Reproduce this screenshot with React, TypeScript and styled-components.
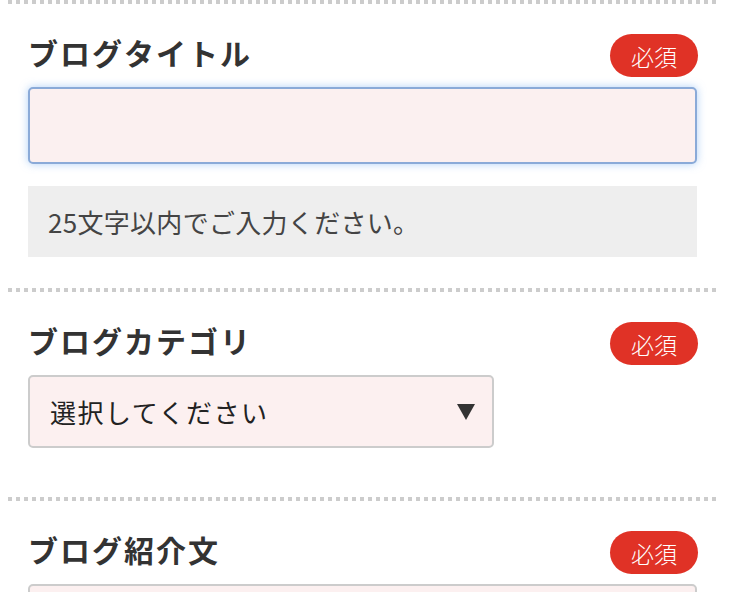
import * as React from 'react';
import styled, { createGlobalStyle } from 'styled-components';

const GlobalStyle = createGlobalStyle`
  html, body {
    margin: 0;
    padding: 0;
    overflow: hidden;
    background: #ffffff;
  }
  body {
    font-family: "Noto Sans CJK JP", "Noto Sans", sans-serif;
    color: #333333;
  }
`

const StyledForm = styled.div`
  width: 709px;
  margin-left: 8px;
`

const StyledDivider = styled.div`
  height: 4px;
  background-image: linear-gradient(to right, #cccccc 50%, transparent 50%);
  background-size: 8px 4px;
  background-repeat: repeat-x;
`

const StyledSection = styled.section<{ bottom: number }>`
  display: flex;
  flex-direction: column;
  padding: 30px 20px ${props => props.bottom}px;
`

const StyledHeader = styled.div`
  display: flex;
  align-items: center;
  justify-content: space-between;
  height: 43px;
  margin-bottom: 10px;
`

const StyledTitle = styled.h2`
  margin: 0 0 7px 0;
  font-size: 30px;
  font-weight: 700;
  letter-spacing: 2px;
  color: #333333;
  line-height: 1;
`

const StyledBadge = styled.span`
  display: flex;
  align-items: center;
  justify-content: center;
  width: 88px;
  height: 43px;
  border-radius: 22px;
  background-color: #e03226;
  color: #ffffff;
  font-size: 23px;
  font-weight: 300;
  margin-right: -1px;
`

const StyledInput = styled.input`
  box-sizing: border-box;
  width: 100%;
  height: 77px;
  margin: 0;
  border: 2px solid #8aaad8;
  border-radius: 5px;
  background-color: #fbf0f0;
  box-shadow: 0 0 9px rgba(110, 170, 240, 0.55);
  font-family: inherit;
  font-size: 26px;
  outline: none;
  padding: 0 20px;
`

const StyledHint = styled.div`
  display: flex;
  align-items: center;
  height: 71px;
  margin-top: 22px;
  padding-left: 20px;
  background-color: #eeeeee;
  color: #444444;
  font-size: 26px;
  letter-spacing: 0.3px;
`

const StyledSelect = styled.div`
  box-sizing: border-box;
  display: flex;
  align-items: center;
  justify-content: space-between;
  width: 466px;
  height: 73px;
  padding: 0 17px 0 20px;
  border: 2px solid #cccccc;
  border-radius: 5px;
  background-color: #fcf0f0;
  color: #222222;
  font-size: 26px;
  letter-spacing: 1.5px;
`

const StyledArrow = styled.span`
  width: 0;
  height: 0;
  border-left: 9px solid transparent;
  border-right: 9px solid transparent;
  border-top: 16px solid #333333;
`

const StyledTextarea = styled.textarea`
  box-sizing: border-box;
  display: block;
  width: 100%;
  height: 160px;
  margin: 0;
  border: 2px solid #cccccc;
  border-radius: 5px;
  background-color: #fcf0f0;
  resize: none;
  font-family: inherit;
  font-size: 26px;
  outline: none;
`

const RequiredHeader = ({ title }: { title: string }) => (
  <StyledHeader>
    <StyledTitle>{title}</StyledTitle>
    <StyledBadge>必須</StyledBadge>
  </StyledHeader>
)

export default class App extends React.Component<{}, {}> {
  public render() {
    return (
      <StyledForm>
        <GlobalStyle />
        <StyledDivider />
        <StyledSection bottom={31}>
          <RequiredHeader title="ブログタイトル" />
          <StyledInput type="text" />
          <StyledHint>25文字以内でご入力ください。</StyledHint>
        </StyledSection>
        <StyledDivider />
        <StyledSection bottom={49}>
          <RequiredHeader title="ブログカテゴリ" />
          <StyledSelect>
            <span>選択してください</span>
            <StyledArrow />
          </StyledSelect>
        </StyledSection>
        <StyledDivider />
        <StyledSection bottom={30}>
          <RequiredHeader title="ブログ紹介文" />
          <StyledTextarea />
        </StyledSection>
      </StyledForm>
    )
  }
};
